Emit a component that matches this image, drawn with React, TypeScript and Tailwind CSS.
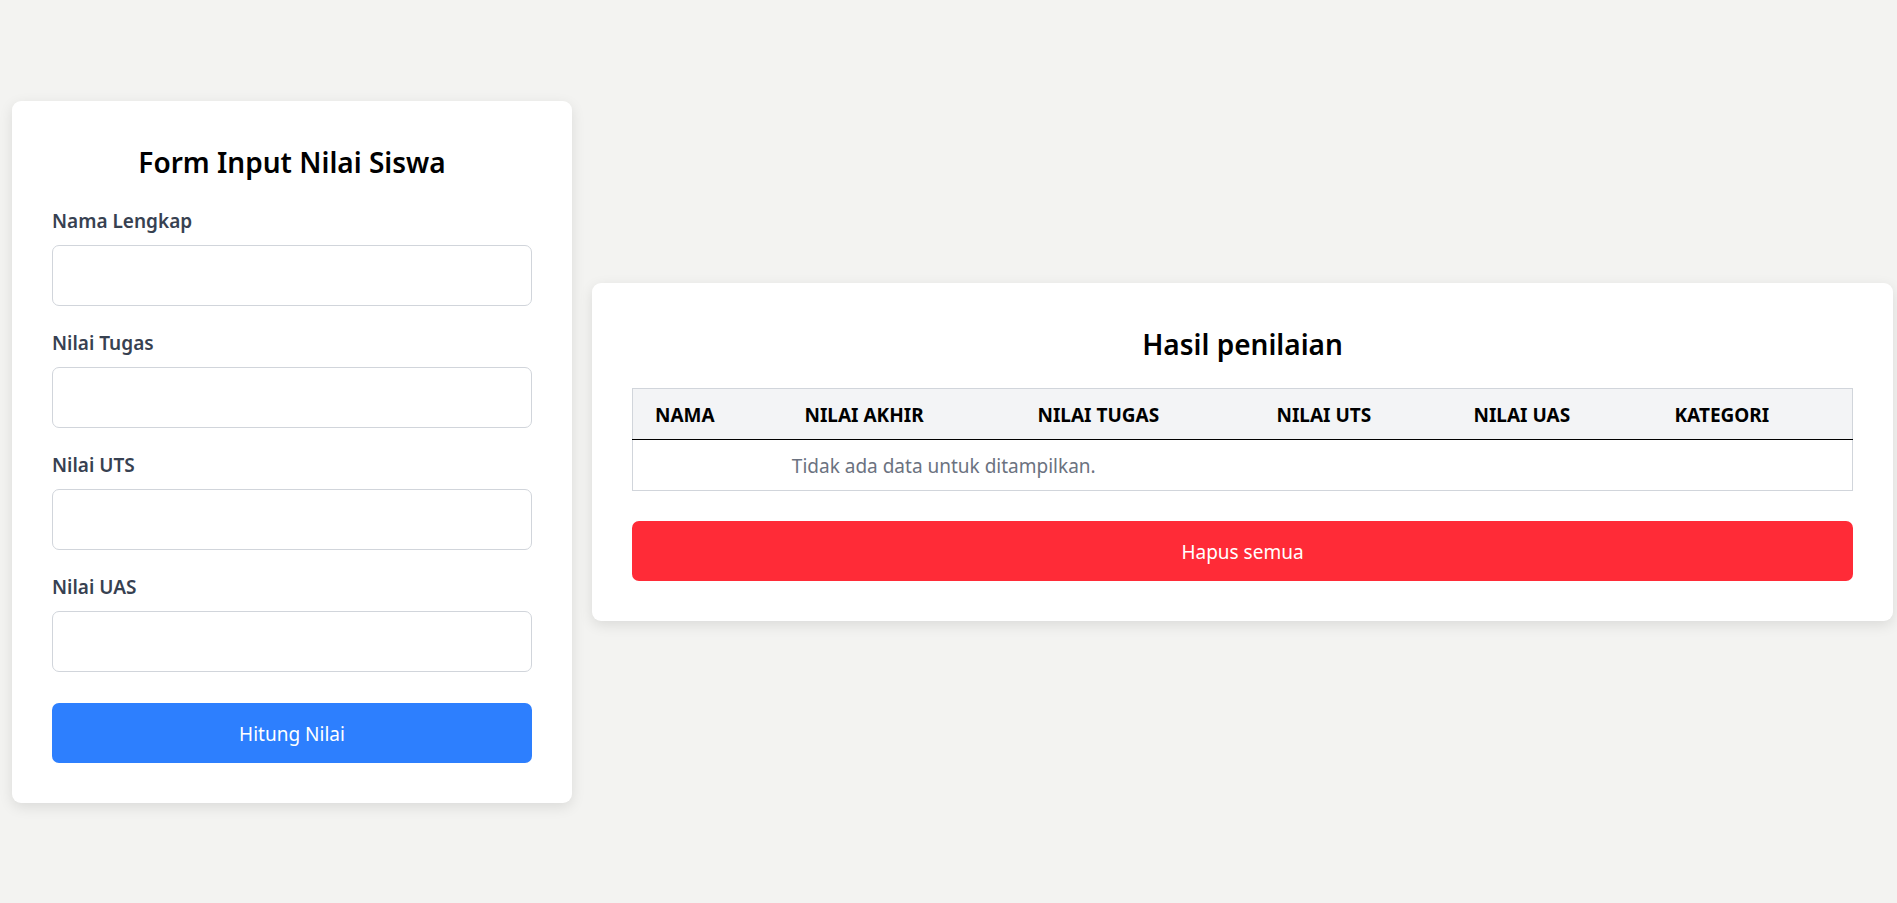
import React from "react";

const font = { fontFamily: '"Noto Sans", "Open Sans", sans-serif' };

function Field({ label }: { label: string }) {
  return (
    <div className="flex flex-col">
      <label className="text-[19px] leading-[28px] font-semibold text-[#374151]">{label}</label>
      <input className="mt-[10px] h-[61px] w-full rounded-[7px] border border-[#d1d5db] bg-white px-3 outline-none" />
    </div>
  );
}

export default function App() {
  const cols = [
    { t: "NAMA", w: 150 },
    { t: "NILAI AKHIR", w: 233 },
    { t: "NILAI TUGAS", w: 239 },
    { t: "NILAI UTS", w: 197 },
    { t: "NILAI UAS", w: 201 },
    { t: "KATEGORI", w: 200 },
  ];
  return (
    <div style={font} className="min-h-screen w-full bg-[#f3f3f1] flex items-center pl-[12px] pr-[6px] gap-[20px]">
      <div className="w-[560px] shrink-0 rounded-[9px] bg-white p-[40px] shadow-[0_4px_14px_rgba(0,0,0,0.1)]">
        <h2 className="text-center text-[28px] leading-[42px] font-semibold text-black">Form Input Nilai Siswa</h2>
        <div className="mt-[24px] flex flex-col gap-[23px]">
          <Field label="Nama Lengkap" />
          <Field label="Nilai Tugas" />
          <Field label="Nilai UTS" />
          <Field label="Nilai UAS" />
        </div>
        <button className="mt-[31px] h-[60px] w-full rounded-[7px] bg-[#2d7ffe] pt-[3px] text-[19px] text-white">Hitung Nilai</button>
      </div>
      <div className="flex-1 rounded-[9px] bg-white p-[40px] shadow-[0_4px_14px_rgba(0,0,0,0.1)]">
        <h2 className="text-center text-[28px] leading-[42px] font-semibold text-black">Hasil penilaian</h2>
        <table className="mt-[23px] w-full border-collapse border border-[#d1d5db] table-fixed">
          <colgroup>
            {cols.map((c) => (
              <col key={c.t} style={{ width: c.w }} />
            ))}
          </colgroup>
          <thead>
            <tr className="bg-[#f3f4f6] border-b border-black">
              {cols.map((c) => (
                <th key={c.t} className="h-[51px] pl-[22px] pt-[3px] text-left text-[19px] font-bold text-black">{c.t}</th>
              ))}
            </tr>
          </thead>
          <tbody>
            <tr>
              <td colSpan={3} className="h-[51px] pt-[4px] text-center text-[19px] text-[#6b7280]">Tidak ada data untuk ditampilkan.</td>
              <td colSpan={3}></td>
            </tr>
          </tbody>
        </table>
        <button className="mt-[30px] h-[60px] w-full rounded-[7px] bg-[#ff2b37] pt-[3px] text-[19px] text-white">Hapus semua</button>
      </div>
    </div>
  );
}
